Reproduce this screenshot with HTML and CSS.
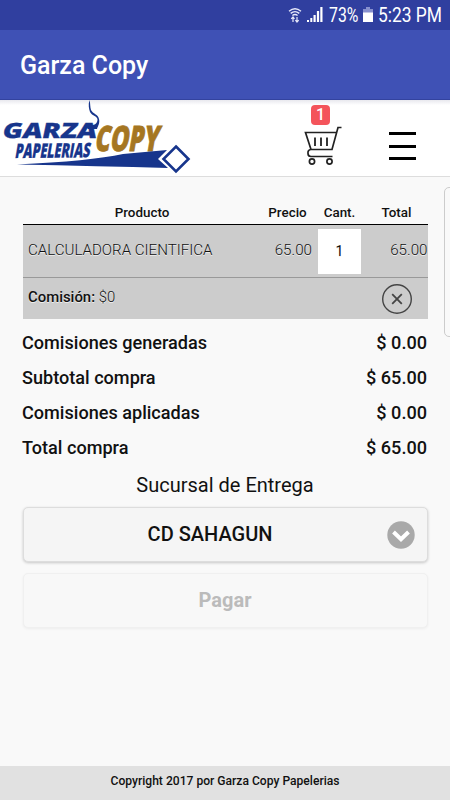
FILE: index.html
```html
<!DOCTYPE html>
<html lang="es">
<head>
<meta charset="utf-8">
<title>Garza Copy</title>
<link rel="stylesheet" href="styles.css">
</head>
<body>
<div class="status">
  <svg class="wifi" width="14" height="16" viewBox="0 0 14 16" fill="none" stroke="#e8eafa" stroke-width="1.4"><path d="M1 4.2Q7-.8 13 4.2M2.7 6.4Q7 2.8 11.3 6.4M4.4 8.5Q7 6.6 9.6 8.5"/><path d="M5 15v-5M3.2 11.8 5 10l1.5 1.8M9 10v5M7.4 13.2 9 15l1.7-1.8" stroke-width="1.2"/></svg>
  <svg class="signal" width="16" height="16" viewBox="0 0 16 16" fill="#fff"><path d="M0 13h2v2H0zM3.3 11h2v4h-2zM6.5 8h2.2v7H6.5zM9.9 4h2.2v11H9.9zM13.3 0h2.2v15h-2.2z"/></svg>
  <span class="pct">73%</span>
  <svg class="battery" width="10" height="16" viewBox="0 0 10 16"><path d="M0 2h3V0h4v2h3v4H0z" fill="#8790ce"/><path d="M0 5.5h10V15H0z" fill="#fff"/></svg>
  <span class="time">5:23 PM</span>
</div>
<header class="appbar"><span>Garza Copy</span></header>
<nav class="brand">
  <svg class="logo" width="200" height="76" viewBox="0 0 200 76">
    <path d="M89.500 0C88 5 89 9 90 12C92 16 98 16 97.500 20C97 25 92 26.500 84 25L88 29L97 29C98 26 100 23 99 19C98 14 93 14 91 10C90 7 90.500 4 89.500 0z" fill="#17358c"/>
    <g class="logo-text">
      <text class="navy" transform="translate(1.500 37.500) skewX(-12)" font-size="21" textLength="94" lengthAdjust="spacingAndGlyphs">GARZA</text>
      <text class="navy" transform="translate(14.500 58) rotate(-.6) skewX(-10)" font-size="20" textLength="75" lengthAdjust="spacingAndGlyphs">PAPELERIAS</text>
      <text class="gold" transform="translate(94 50.500) skewX(-10)" font-size="35" textLength="64" lengthAdjust="spacingAndGlyphs">COPY</text>
    </g>
    <path d="M17 64.500Q90 61 123 54L167 50L158 59L168 68Q100 66 17 64.500z" fill="#17358c"/>
    <path d="M176 46.500 188.500 59 176 71.500 163.500 59z" fill="#fff" stroke="#17358c" stroke-width="2.600"/>
  </svg>
  <div class="cart">
    <svg width="40" height="42" viewBox="0 0 40 42" fill="none" stroke="#222" stroke-width="1.700"><path d="M37.500 1.500H34L28 23.500H7L1.500 6.500H33M7 23.500Q3.500 24 4 27.500Q4 30.500 7 30.500H28.500"/><path d="M11 11.500v8.500M17 11.500v8.500M23 11.500v8.500" stroke-width="1.800"/><circle cx="8" cy="35.500" r="2.600"/><circle cx="25.500" cy="35.500" r="2.600"/></svg>
    <span class="badge">1</span>
  </div>
  <div class="menu"><i></i><i></i><i></i></div>
</nav>
<main>
  <aside class="panel"></aside>
  <section class="table">
    <div class="row head"><span>Producto</span><span>Precio</span><span>Cant.</span><span>Total</span></div>
    <div class="row item"><span class="product">CALCULADORA CIENTIFICA</span><span class="price">65.00</span><span class="qty">1</span><span class="price">65.00</span></div>
    <div class="commission"><span><b>Comisión:</b> $0</span>
      <svg width="32" height="32" viewBox="0 0 32 32" fill="none" stroke="#444"><circle cx="16" cy="16" r="14.300" stroke-width="1.400"/><path d="M11.200 11.200l9.600 9.600M20.800 11.200l-9.600 9.600" stroke-width="1.800"/></svg>
    </div>
  </section>
  <section class="totals">
    <div><span>Comisiones generadas</span><span>$ 0.00</span></div>
    <div><span>Subtotal compra</span><span>$ 65.00</span></div>
    <div><span>Comisiones aplicadas</span><span>$ 0.00</span></div>
    <div><span>Total compra</span><span>$ 65.00</span></div>
  </section>
  <div class="label"><span>Sucursal de Entrega</span></div>
  <div class="button select"><span>CD SAHAGUN</span>
    <svg class="chevron" width="28" height="28" viewBox="0 0 28 28"><circle cx="14" cy="14" r="13.700" fill="#a9a9a9"/><path d="M6.500 11 14 18.200 21.500 11" fill="none" stroke="#fff" stroke-width="4"/></svg>
  </div>
  <div class="button pay"><span>Pagar</span></div>
</main>
<footer><span>Copyright 2017 por Garza Copy Papelerias</span></footer>
</body>
</html>
```
FILE: styles.css
```css
* { box-sizing: border-box; }
body {
  margin: 0;
  height: 800px;
  overflow: hidden;
  display: flex;
  flex-direction: column;
  background: #f9f9f9;
  color: #111;
  font-family: Roboto, sans-serif;
}
svg { display: block; flex: none; }
.status {
  height: 30px;
  flex: none;
  display: flex;
  align-items: center;
  justify-content: flex-end;
  padding-right: 11px;
  background: #303f9f;
  color: #fff;
  font-size: 20px;
  white-space: nowrap;
}
.wifi { margin-right: 5px; }
.signal { margin-right: 6px; }
.pct, .time { flex: none; transform-origin: left center; }
.pct { width: 30px; transform: scaleX(.79); }
.battery { margin: 0 5px 0 4px; }
.time { width: 61px; transform: scaleX(.87); }
.pct, .time { font-stretch: 100%; }
.appbar {
  height: 70px;
  flex: none;
  display: flex;
  align-items: center;
  padding: 2px 20px 0;
  background: #3f51b5;
  border-bottom: 1px solid #33439f;
  color: #fff;
  font-size: 25px;
  font-weight: 500;
}
.brand {
  height: 77px;
  flex: none;
  display: flex;
  background: linear-gradient(#e8e8ee, #fff 5px);
  border-bottom: 1px solid #ddd;
}
.logo-text { font-family: "Open Sans", sans-serif; font-weight: 800; }
.navy { fill: #17358c; stroke: #17358c; stroke-width: .3px; }
.gold { fill: #a57622; stroke: #a57622; stroke-width: .9px; }
.cart { position: relative; margin: 26px 0 0 104px; width: 40px; }
.badge {
  position: absolute;
  left: 7px;
  top: -21px;
  width: 19px;
  height: 20px;
  border-radius: 4px;
  background: #f4545b;
  color: #fff;
  font-size: 16px;
  font-weight: 500;
  line-height: 19px;
  text-align: center;
}
.menu { display: flex; flex-direction: column; gap: 9.5px; margin: 32px 0 0 45px; }
.menu i { width: 27px; height: 3px; background: #000; }
main { position: relative; flex: 1; padding: 24px 22.5px 0; }
.panel {
  position: absolute;
  left: 444px;
  top: 10px;
  width: 12px;
  height: 150px;
  border: 1px solid #ccc;
  border-radius: 5px;
}
.row { display: grid; grid-template-columns: 239px 52px 52px 62px; align-items: center; text-align: center; }
.head {
  height: 24px;
  border-bottom: 1px solid #000;
  font-size: 13.4px;
  font-weight: 500;
}
.item {
  height: 53px;
  background: #ccc;
  border-bottom: 1px solid #999;
  font-size: 15.2px;
  font-weight: 300;
  text-shadow: 0 1px 0 #eee;
}
.product { text-align: left; padding-left: 5.5px; font-size: 15.1px; white-space: nowrap; }
.product, .price { position: relative; top: -1px; }
.price { text-align: right; padding-right: 1.5px; }
.price:last-child { padding-right: 0; }
.qty { width: 43px; height: 45px; margin: 0 auto; background: #fff; font-size: 14px; font-weight: 400; line-height: 45px; }
.commission {
  height: 41px;
  display: flex;
  align-items: center;
  justify-content: space-between;
  padding: 0 15px 0 5.5px;
  background: #ccc;
  font-size: 14.9px;
  font-weight: 300;
  text-shadow: 0 1px 0 #eee;
}
.commission > span { margin-top: -4px; }
.commission b { font-weight: 500; }
.totals { padding-top: 6px; font-size: 18.1px; font-weight: 500; }
.totals div { height: 35px; display: flex; align-items: center; justify-content: space-between; }
.totals div { margin-left: -.5px; margin-right: .5px; }
.label { height: 42px; display: flex; align-items: center; justify-content: center; padding-bottom: 3px; font-size: 20px; }
.button {
  position: relative;
  height: 55px;
  display: flex;
  align-items: center;
  justify-content: center;
  border: 1px solid #ddd;
  border-radius: 5px;
  font-size: 20px;
  font-weight: 500;
}
.select { background: #f5f5f5; box-shadow: 0 1px 3px rgba(0, 0, 0, .2); padding: 0 30px 1px 0; }
.chevron { position: absolute; right: 12px; top: 13px; }
.pay { margin-top: 10.5px; background: #f8f8f8; border-color: #f0f0f0; box-shadow: 0 1px 3px rgba(0, 0, 0, .05); color: #bbb; font-weight: 700; }
footer {
  height: 34px;
  flex: none;
  display: flex;
  align-items: center;
  justify-content: center;
  padding-bottom: 4px;
  background: #e1e1e1;
  font-size: 12.1px;
  font-weight: 500;
}
```
